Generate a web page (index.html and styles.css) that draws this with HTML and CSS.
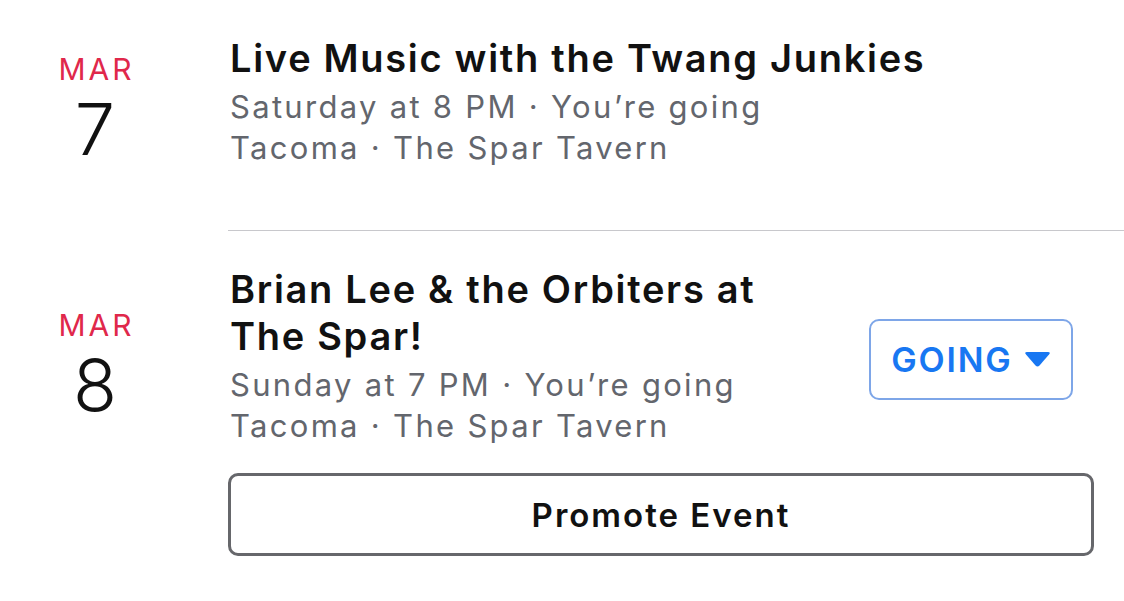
FILE: index.html
```html
<!DOCTYPE html>
<html lang="en">
<head>
  <meta charset="UTF-8" />
  <title>Events</title>
  <link rel="stylesheet" href="styles.css">
</head>
<body>

  <!-- EVENT LIST -->
  <div class="events">

    <div class="event first">
      <div class="date">
        <span class="month">MAR</span>
        <span class="day">7</span>
      </div>
      <div class="info">
        <div class="details">
          <h3 class="title">Live Music with the Twang Junkies</h3>
          <p class="meta">Saturday at 8 PM · You’re going</p>
          <p class="meta">Tacoma · The Spar Tavern</p>
        </div>
      </div>
    </div>

    <div class="event second">
      <div class="date">
        <span class="month">MAR</span>
        <span class="day">8</span>
      </div>
      <div class="info">
        <div class="details narrow">
          <h3 class="title">Brian Lee &amp; the Orbiters at The Spar!</h3>
          <p class="meta">Sunday at 7 PM · You’re going</p>
          <p class="meta">Tacoma · The Spar Tavern</p>
        </div>
        <button class="going">
          <span>GOING</span>
          <svg class="caret" width="27" height="17" viewBox="0 0 27 17">
            <path d="M3 1 H24 Q27 1 25 3.5 L15.5 14.5 Q13.5 16.5 11.5 14.5 L2 3.5 Q0 1 3 1 Z" fill="#1877f2"/>
          </svg>
        </button>
      </div>
    </div>

    <div class="actions">
      <button class="promote">Promote Event</button>
    </div>

  </div>

</body>
</html>
```

FILE: styles.css
```css
body {
  font-family: Inter, "Noto Sans", sans-serif;
  margin: 0;
  background: #fff;
  color: #111;
}

.events {
  padding-top: 35px;
}

/* ONE EVENT ROW */
.event {
  display: flex;
  align-items: center;
}

.date {
  width: 190px;
  flex-shrink: 0;
  display: flex;
  flex-direction: column;
  align-items: center;
  padding-top: 20px;
  margin-right: 38px;
}

/* first row has divider padding below, so pin the date to the top */
.first .date {
  align-self: flex-start;
  padding-top: 16px;
}

.month {
  color: #e0284b;
  font-size: 30px;
  line-height: 36px;
  letter-spacing: 3px;
  margin-right: -3px;
}

.day {
  font-size: 72px;
  font-weight: 300;
  line-height: 83px;
  color: #111;
}

.info {
  flex: 1;
  display: flex;
  align-items: center;
  padding-left: 2px;
}

.first .info {
  padding-bottom: 62px;
  border-bottom: 1.5px solid #c8c8cc;
}

.second {
  margin-top: 35px;
}

.details {
  flex: 1;
}

.details.narrow {
  max-width: 590px;
}

.title {
  margin: 0;
  font-size: 38px;
  line-height: 47px;
  font-weight: 600;
  letter-spacing: 1.7px;
}

.meta {
  margin: 0;
  font-size: 31px;
  line-height: 41px;
  letter-spacing: 2.3px;
  color: #63666d;
}

.title + .meta {
  margin-top: 4px;
}

/* BUTTONS */
.going {
  width: 204px;
  height: 81px;
  margin: 6px 51px 0 auto;
  border: 2px solid #7ea6e8;
  border-radius: 10px;
  background: #fff;
  color: #1877f2;
  font-family: inherit;
  font-size: 34px;
  font-weight: 600;
  letter-spacing: 1.8px;
  display: flex;
  align-items: center;
  justify-content: center;
  gap: 11px;
}

.actions {
  padding: 27px 30px 0 228px;
}

.promote {
  width: 100%;
  height: 83px;
  border: 3px solid #66676b;
  border-radius: 10px;
  background: #fff;
  color: #111;
  font-family: inherit;
  font-size: 33px;
  font-weight: 600;
  letter-spacing: 2px;
}
```
